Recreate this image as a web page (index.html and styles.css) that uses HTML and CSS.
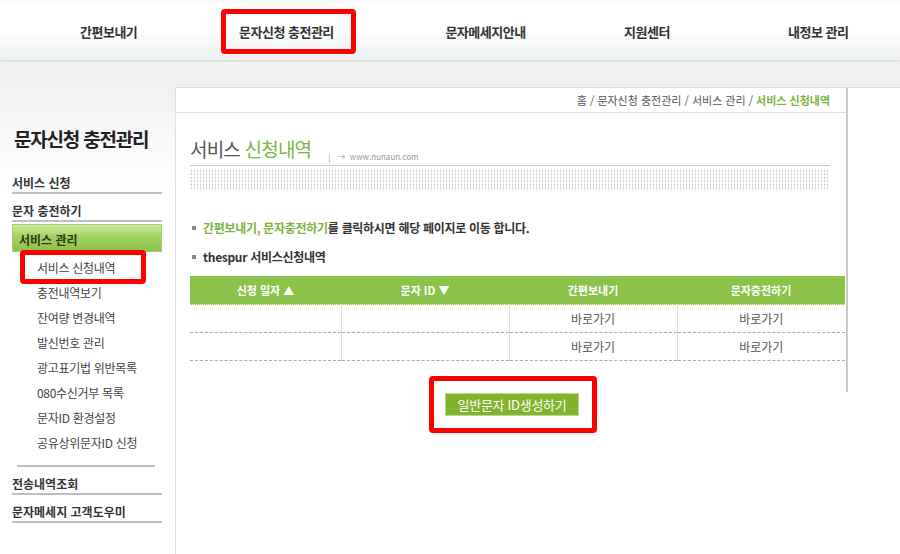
FILE: index.html
```html
<!DOCTYPE html>
<html lang="ko">
<head>
    <meta charset="UTF-8">
    <meta name="viewport" content="width=device-width, initial-scale=1.0">
    <title>서비스 신청내역</title>
    <link rel="stylesheet" href="styles.css">
</head>
<body>
    <header class="gnb">
        <ul class="gnb-list">
            <li class="gnb-item">간편보내기</li>
            <li class="gnb-item mark">문자신청 충전관리</li>
            <li class="gnb-item">문자메세지안내</li>
            <li class="gnb-item">지원센터</li>
            <li class="gnb-item">내정보 관리</li>
        </ul>
    </header>
    <div class="subbar"></div>

    <div class="container">
        <aside class="lnb">
            <h2 class="lnb-title">문자신청 충전관리</h2>
            <ul class="lnb-menu">
                <li class="lnb-link">서비스 신청</li>
                <li class="lnb-link">문자 충전하기</li>
                <li class="lnb-link active">서비스 관리</li>
            </ul>
            <ul class="lnb-sub">
                <li class="mark-sub">서비스 신청내역</li>
                <li>충전내역보기</li>
                <li>잔여량 변경내역</li>
                <li>발신번호 관리</li>
                <li>광고표기법 위반목록</li>
                <li>080수신거부 목록</li>
                <li>문자ID 환경설정</li>
                <li>공유상위문자ID 신청</li>
            </ul>
            <hr class="lnb-sep">
            <ul class="lnb-menu">
                <li class="lnb-link">전송내역조회</li>
                <li class="lnb-link">문자메세지 고객도우미</li>
            </ul>
        </aside>

        <main class="content">
            <div class="content-box">
                <div class="location">홈 / 문자신청 충전관리 / 서비스 관리 / <strong>서비스 신청내역</strong></div>

                <div class="title-area">
                    <h3 class="page-title">서비스 <span>신청내역</span></h3>
                    <span class="site-url">&rarr;&nbsp; www.nunaun.com</span>
                </div>
                <div class="dots"></div>

                <ul class="notice">
                    <li><em>간편보내기, 문자충전하기</em>를 클릭하시면 해당 페이지로 이동 합니다.</li>
                    <li>thespur 서비스신청내역</li>
                </ul>

                <table class="list-table">
                    <colgroup>
                        <col style="width: 151px">
                        <col style="width: 168px">
                        <col style="width: 168px">
                        <col>
                    </colgroup>
                    <thead>
                        <tr>
                            <th>신청 일자 &#9650;</th>
                            <th>문자 ID &#9660;</th>
                            <th>간편보내기</th>
                            <th>문자충전하기</th>
                        </tr>
                    </thead>
                    <tbody>
                        <tr>
                            <td></td>
                            <td></td>
                            <td>바로가기</td>
                            <td>바로가기</td>
                        </tr>
                        <tr>
                            <td></td>
                            <td></td>
                            <td>바로가기</td>
                            <td>바로가기</td>
                        </tr>
                    </tbody>
                </table>
            </div>

            <div class="btn-area">
                <a href="#" class="btn-green mark-btn">일반문자 ID생성하기</a>
            </div>
        </main>
    </div>
</body>
</html>
```

FILE: styles.css
```css
body {
    margin: 0;
    padding: 0;
    background: #fff;
    color: #333;
    font-family: "Noto Sans CJK KR", "Noto Sans", sans-serif;
    font-size: 12px;
}

ul {
    margin: 0;
    padding: 0;
    list-style: none;
}

/* 상단 메뉴 */
.gnb {
    height: 60px;
    background: linear-gradient(#f7f7f7 0, #fff 4px, #fff 45%, #edf1f1 100%);
    box-shadow: 0 1px 2px rgba(0, 0, 0, 0.12);
    position: relative;
    z-index: 1;
}

.gnb-list {
    display: flex;
    align-items: center;
    height: 60px;
    padding-top: 2px;
    box-sizing: border-box;
}

.gnb-item {
    position: relative;
    font-size: 13px;
    font-weight: bold;
    color: #333;
    text-align: center;
    white-space: nowrap;
    letter-spacing: -0.5px;
}

.gnb-item:nth-child(1) { width: 57px; margin-left: 80px; }
.gnb-item:nth-child(2) { width: 93px; margin-left: 102px; }
.gnb-item:nth-child(3) { width: 95px; margin-left: 106px; }
.gnb-item:nth-child(4) { width: 44px; margin-left: 91px; }
.gnb-item:nth-child(5) { width: 59px; margin-left: 120px; }

.mark::after,
.mark-sub::after,
.mark-btn::after {
    content: "";
    position: absolute;
    border: 5px solid #f00;
    border-radius: 4px;
}

.mark::after {
    left: -18px;
    right: -24px;
    top: -13px;
    bottom: -13px;
}

.subbar {
    height: 27px;
    background: #f1f1f1;
}

.container {
    display: flex;
    min-height: 467px;
}

/* 왼쪽 메뉴 */
.lnb {
    width: 175px;
    flex-shrink: 0;
    border-right: 1px solid #ddd;
    background: linear-gradient(#f1f1f1 0, #fff 110px);
}

.lnb-title {
    margin: 39px 0 0 14px;
    height: 40px;
    font-size: 19px;
    font-weight: bold;
    color: #222;
    letter-spacing: -1.2px;
    line-height: 26px;
}

.lnb-menu {
    padding: 0 13px 0 12px;
}

.lnb-link {
    height: 28px;
    padding-top: 8px;
    box-sizing: border-box;
    line-height: 18px;
    font-size: 12px;
    font-weight: bold;
    color: #333;
    border-bottom: 2px solid #b7bfc7;
}

.lnb-link.active {
    margin-top: 2px;
    padding: 6px 0 0 6px;
    border: 1px solid #a5cd6c;
    background: linear-gradient(#cbe99a, #a3d160 45%, #8cc04a);
    color: #2a3a12;
}

.lnb-sub {
    padding: 3px 0 0 37px;
}

.lnb-sub li {
    position: relative;
    line-height: 25px;
    height: 25px;
    font-size: 12px;
    color: #444;
    letter-spacing: -0.3px;
}

.mark-sub::after {
    left: -17px;
    width: 116px;
    top: -5px;
    bottom: -4px;
}

.lnb-sep {
    margin: 10px 20px 0 17px;
    border: 0;
    border-top: 2px solid #b7bfc7;
}

/* 본문 */
.content {
    flex: 1;
    border-top: 1px solid #ddd;
}

.content-box {
    width: 670px;
    border-right: 2px solid #c8c8c8;
    padding-bottom: 31px;
}

.location {
    height: 24px;
    line-height: 24px;
    border-bottom: 1px solid #ddd;
    text-align: right;
    padding-right: 16px;
    font-size: 11px;
    color: #555;
}

.location strong {
    color: #7cb342;
}

.title-area {
    display: flex;
    align-items: flex-end;
    margin: 20px 16px 0 14px;
    border-bottom: 1px solid #ccc;
    height: 32px;
}

.page-title {
    margin: 0 18px 4px 0;
    font-size: 19px;
    font-weight: normal;
    color: #555;
    letter-spacing: -0.8px;
    line-height: 24px;
}

.page-title span {
    color: #7cb342;
}

.site-url {
    border-left: 1px solid #ccc;
    padding: 0 0 0 7px;
    height: 10px;
    font-size: 8px;
    line-height: 1;
    color: #999;
    position: relative;
    top: -2px;
}

.dots {
    margin: 3px 16px 0 14px;
    height: 22px;
    background-image: radial-gradient(circle, #c4c4c4 0.7px, transparent 0.8px);
    background-size: 3px 3.5px;
}

.notice {
    margin: 28px 0 0 16px;
}

.notice li {
    position: relative;
    padding-left: 11px;
    height: 29px;
    line-height: 18px;
    font-size: 12px;
    font-weight: bold;
    color: #333;
    letter-spacing: -0.3px;
}

.notice li::before {
    content: "";
    position: absolute;
    left: 0;
    top: 7px;
    width: 4px;
    height: 4px;
    background: #888;
}

.notice em {
    font-style: normal;
    color: #7cb342;
}

.list-table {
    margin: -1px 0 0 14px;
    width: 655px;
    border-collapse: collapse;
    table-layout: fixed;
}

.list-table th {
    height: 28px;
    padding: 0;
    background: #8bc34a;
    color: #fff;
    font-size: 11px;
    font-weight: bold;
    border-bottom: 1px dotted #e6f2d6;
}

.list-table td {
    height: 27px;
    padding: 0;
    text-align: center;
    font-size: 12px;
    color: #555;
    border-bottom: 1px dashed #aaa;
    border-left: 1px solid #ddd;
}

.list-table td:first-child {
    border-left: 0;
}

.btn-area {
    width: 672px;
    text-align: center;
    padding-top: 1px;
}

.btn-green {
    position: relative;
    display: inline-block;
    width: 132px;
    height: 21px;
    line-height: 21px;
    border: 1px solid #b9d98e;
    background: #80b42c;
    color: #fff;
    font-size: 13px;
    text-decoration: none;
    letter-spacing: -0.3px;
}

.mark-btn::after {
    left: -17px;
    right: -19px;
    top: -18px;
    bottom: -18px;
}
```
